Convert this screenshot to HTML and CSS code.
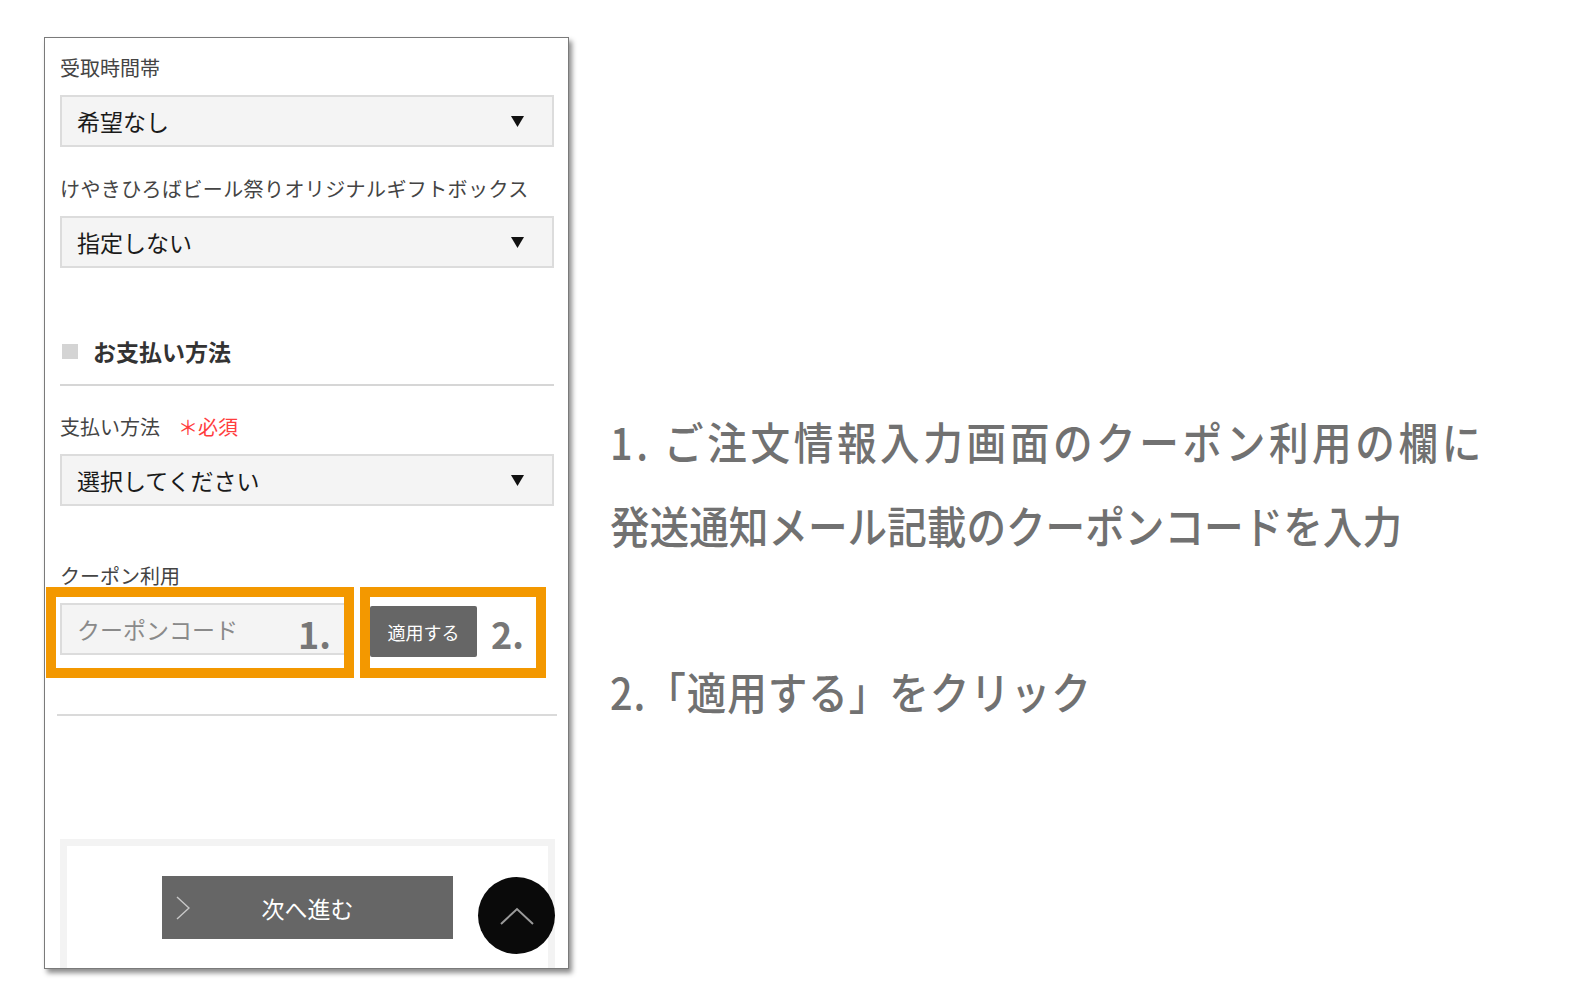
FILE: index.html
```html
<!DOCTYPE html>
<html lang="ja">
  <head>
    <meta charset="UTF-8" />
    <meta name="viewport" content="width=device-width, initial-scale=1.0" />
    <title>クーポン利用方法</title>
    <link rel="stylesheet" href="styles.css">
  </head>
  <body>
    <main class="page flex">
      <div class="phone">
        <div class="field">
          <p class="field-label">受取時間帯</p>
          <div class="select">
            <span>希望なし</span>
            <svg class="caret" width="13" height="11" viewBox="0 0 13 11"><path d="M0 0H13L6.5 11Z" fill="#111"/></svg>
          </div>
        </div>
        <div class="field">
          <p class="field-label label-wide">けやきひろばビール祭りオリジナルギフトボックス</p>
          <div class="select">
            <span>指定しない</span>
            <svg class="caret" width="13" height="11" viewBox="0 0 13 11"><path d="M0 0H13L6.5 11Z" fill="#111"/></svg>
          </div>
        </div>

        <h2 class="section-title flex v-center"><span class="square"></span>お支払い方法</h2>

        <div class="field">
          <p class="field-label">支払い方法<span class="required">＊必須</span></p>
          <div class="select">
            <span>選択してください</span>
            <svg class="caret" width="13" height="11" viewBox="0 0 13 11"><path d="M0 0H13L6.5 11Z" fill="#111"/></svg>
          </div>
        </div>

        <div class="field coupon">
          <p class="field-label">クーポン利用</p>
          <div class="coupon-row flex">
            <div class="coupon-input">クーポンコード</div>
            <button class="apply">適用する</button>
            <div class="mark mark-input flex v-center"><span class="mark-num">1.</span></div>
            <div class="mark mark-apply flex v-center"><span class="mark-num">2.</span></div>
          </div>
        </div>

        <hr class="rule">

        <div class="next-panel">
          <button class="next flex v-center">
            <svg class="chevron" width="14" height="24" viewBox="0 0 14 24"><path d="M1 1L13 12L1 23" fill="none" stroke="#c8c8c8" stroke-width="1.4"/></svg>
            <span>次へ進む</span>
          </button>
        </div>

        <a class="page-top flex v-center" href="#">
          <svg width="36" height="18" viewBox="0 0 36 18"><path d="M2 17L18 2L34 17" fill="none" stroke="#9a9a9a" stroke-width="2"/></svg>
        </a>
      </div>

      <div class="notes">
        <p class="note"><span class="note-wide">1. ご注文情報入力画面のクーポン利用の欄に</span><br>発送通知メール記載のクーポンコードを入力</p>
        <p class="note note-2">2.「適用する」をクリック</p>
      </div>
    </main>
  </body>
</html>
```

FILE: styles.css
```css
*,
*::before,
*::after {
  box-sizing: border-box;
}
:root {
  --clr-text: #3a3a3a;
  --clr-field: #f4f4f4;
  --clr-line: #d6d6d6;
  --clr-mark: #f39800;
  --clr-note: #717171;
  --ff-base: "Noto Sans CJK JP", "Noto Sans", sans-serif;
}
body {
  margin: 0;
  min-height: 100vh;
  font-family: var(--ff-base);
  color: var(--clr-text);
  background-color: #fff;
}
.flex {
  display: flex;
}
.v-center {
  align-items: center;
}
p {
  margin: 0;
}

.page {
  padding: 37px 0 0 44px;
  align-items: flex-start;
}

/* phone screenshot */
.phone {
  position: relative;
  flex: none;
  width: 525px;
  height: 932px;
  padding: 16px 14px 0 15px;
  border: 1px solid #7a7a7a;
  overflow: hidden;
  box-shadow: 3px 4px 5px rgba(0, 0, 0, 0.45);
}
.field + .field {
  margin-top: 28px;
}
.field-label {
  font-size: 20px;
  line-height: 27px;
  margin-bottom: 14px;
  color: #444;
}
.label-wide {
  letter-spacing: 0.4px;
}
.required {
  margin-left: 18px;
  color: #ff3d3d;
}
.select {
  display: flex;
  align-items: center;
  justify-content: space-between;
  height: 52px;
  padding: 0 28px 0 15px;
  border: 2px solid #dcdcdc;
  background-color: var(--clr-field);
  font-size: 23px;
  color: #1a1a1a;
}
.caret {
  margin-top: 1px;
}

.section-title {
  margin: 67px 0 0;
  padding-bottom: 16px;
  border-bottom: 2px solid var(--clr-line);
  font-size: 23px;
  line-height: 33px;
  font-weight: 700;
  color: #333;
}
.section-title + .field {
  margin-top: 27px;
}
.square {
  width: 16px;
  height: 15px;
  margin: 0 15px 0 2px;
  background-color: #d4d4d4;
}

.field.coupon {
  margin-top: 56px;
}
.coupon-row {
  position: relative;
  align-items: flex-start;
}
.coupon-input {
  display: flex;
  align-items: center;
  width: 290px;
  height: 52px;
  padding-left: 15px;
  border: 2px solid #dcdcdc;
  background-color: var(--clr-field);
  font-size: 23px;
  color: #8a8a8a;
}
.apply {
  width: 107px;
  height: 51px;
  margin: 3px 0 0 20px;
  border: 0;
  border-radius: 2px;
  background-color: #666;
  font-family: var(--ff-base);
  font-size: 18px;
  color: #fff;
}

/* annotation frames */
.mark {
  position: absolute;
  top: -16px;
  height: 91px;
  justify-content: flex-end;
  border: 10px solid var(--clr-mark);
}
.mark-input {
  left: -14px;
  width: 308px;
  padding-right: 13px;
}
.mark-apply {
  left: 300px;
  width: 186px;
  padding-right: 12px;
}
.mark-num {
  font-size: 36px;
  font-weight: 700;
  line-height: 1;
  color: #777;
}

.rule {
  margin: 57px -3px 0;
  border: 0;
  border-top: 2px solid #dadada;
}
.next-panel {
  height: 200px;
  margin: 123px -1px 0 0;
  padding-top: 30px;
  border: 7px solid #f3f3f3;
}
.next {
  position: relative;
  justify-content: center;
  width: 291px;
  height: 63px;
  margin: 0 auto;
  border: 0;
  background-color: #666;
  font-family: var(--ff-base);
  font-size: 23px;
  color: #fff;
}
.chevron {
  position: absolute;
  left: 14px;
  top: 20px;
}
.page-top {
  position: absolute;
  left: 433px;
  top: 839px;
  width: 77px;
  height: 77px;
  justify-content: center;
  border-radius: 50%;
  background-color: #0a0a0a;
}

/* explanation text */
.notes {
  margin: 362px 0 0 41px;
  transform: scaleX(0.9);
  transform-origin: left top;
  white-space: nowrap;
}
.note {
  font-size: 44px;
  line-height: 84px;
  font-weight: 500;
  color: var(--clr-note);
}
.note-wide {
  letter-spacing: 4px;
}
.note-2 {
  margin-top: 82px;
  letter-spacing: 1px;
}
```
